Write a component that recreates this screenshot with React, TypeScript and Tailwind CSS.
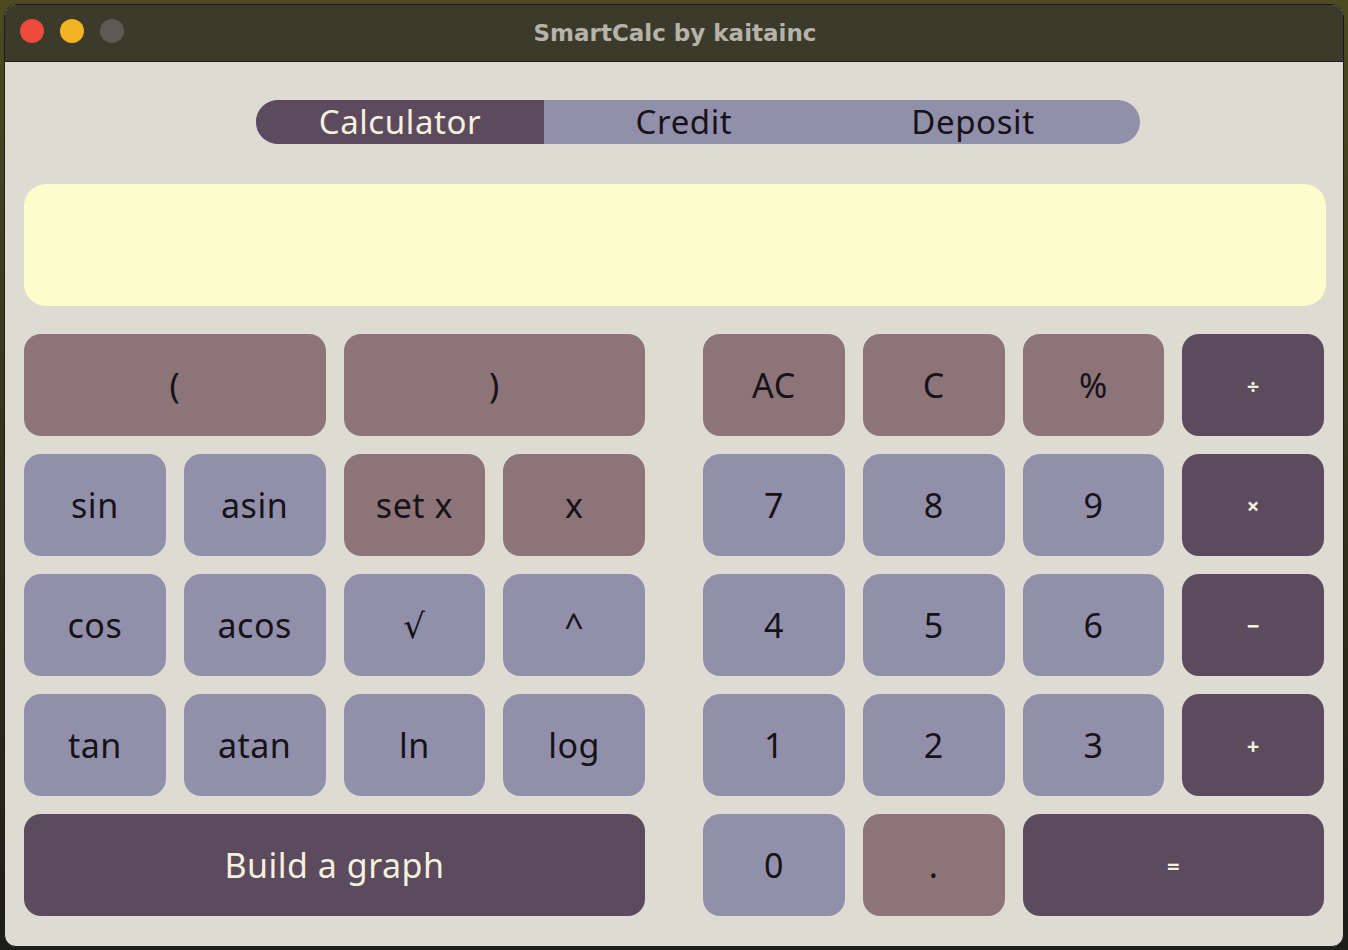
import React from "react";

type Tone = "light" | "mauve" | "dark";

const toneClass: Record<Tone, string> = {
  light: "bg-[#928fab] text-[#151318]",
  mauve: "bg-[#8c7479] text-[#151318]",
  dark: "bg-[#5c4a5e] text-[#f6f1dc]",
};

function Key({
  label,
  tone = "light",
  span = 1,
  small = false,
}: {
  label: string;
  tone?: Tone;
  span?: number;
  small?: boolean;
}) {
  const spanClass = span === 4 ? "col-span-4" : span === 2 ? "col-span-2" : "";
  return (
    <button
      className={`${toneClass[tone]} ${spanClass} h-[102px] rounded-[17px] flex items-center justify-center ${
        small ? "text-[22px] font-bold" : "text-[34px] tracking-[0.5px]"
      }`}
    >
      {label}
    </button>
  );
}

export default function App() {
  return (
    <div
      className="w-[1348px] h-[950px] bg-gradient-to-b from-[#4b4b1f] to-[#1d1d18] p-[4px]"
      style={{ fontFamily: '"Noto Sans", "DejaVu Sans", sans-serif' }}
    >
      <div className="h-[943px] rounded-[12px] border border-[#1b1b17] overflow-hidden flex flex-col bg-[#dddbd2]">
        {/* title bar */}
        <div className="relative h-[57px] shrink-0 bg-[#3b3a2b] border-b border-[#1d1d18] flex items-center justify-center">
          <div className="absolute left-[15px] top-[14px] flex gap-[16px]">
            <span className="w-[24px] h-[24px] rounded-full bg-[#ec4b3b]" />
            <span className="w-[24px] h-[24px] rounded-full bg-[#f3b424]" />
            <span className="w-[24px] h-[24px] rounded-full bg-[#5b5a55]" />
          </div>
          <span
            className="text-[#b6b4a8] text-[23px] font-bold ml-[2px]"
            style={{ fontFamily: '"DejaVu Sans", "Liberation Sans", sans-serif' }}
          >
            SmartCalc by kaitainc
          </span>
        </div>

        <div className="px-[19px] pt-[38px] flex flex-col">
          {/* tabs */}
          <div className="self-start ml-[232px] w-[884px] h-[44px] rounded-full bg-[#928fab] overflow-hidden flex text-[33px] tracking-[0.6px] leading-[44px]">
            <div className="w-[288px] bg-[#5c4a5e] text-[#f6f1dc] text-center">
              Calculator
            </div>
            <div className="w-[280px] text-[#151318] text-center">Credit</div>
            <div className="w-[298px] text-[#151318] text-center">Deposit</div>
          </div>

          {/* display */}
          <div className="mt-[40px] h-[122px] rounded-[22px] bg-[#fdfdcb] mr-[-2px]" />

          {/* keypad */}
          <div className="mt-[28px] flex gap-[58px]">
            <div className="flex-1 grid grid-cols-4 gap-[18px]">
              <Key label="(" tone="mauve" span={2} />
              <Key label=")" tone="mauve" span={2} />
              <Key label="sin" />
              <Key label="asin" />
              <Key label="set x" tone="mauve" />
              <Key label="x" tone="mauve" />
              <Key label="cos" />
              <Key label="acos" />
              <Key label="√" />
              <Key label="^" />
              <Key label="tan" />
              <Key label="atan" />
              <Key label="ln" />
              <Key label="log" />
              <Key label="Build a graph" tone="dark" span={4} />
            </div>
            <div className="flex-1 grid grid-cols-4 gap-[18px]">
              <Key label="AC" tone="mauve" />
              <Key label="C" tone="mauve" />
              <Key label="%" tone="mauve" />
              <Key label="÷" tone="dark" small />
              <Key label="7" />
              <Key label="8" />
              <Key label="9" />
              <Key label="×" tone="dark" small />
              <Key label="4" />
              <Key label="5" />
              <Key label="6" />
              <Key label="−" tone="dark" small />
              <Key label="1" />
              <Key label="2" />
              <Key label="3" />
              <Key label="+" tone="dark" small />
              <Key label="0" />
              <Key label="." tone="mauve" />
              <Key label="=" tone="dark" span={2} small />
            </div>
          </div>
        </div>
      </div>
    </div>
  );
}
